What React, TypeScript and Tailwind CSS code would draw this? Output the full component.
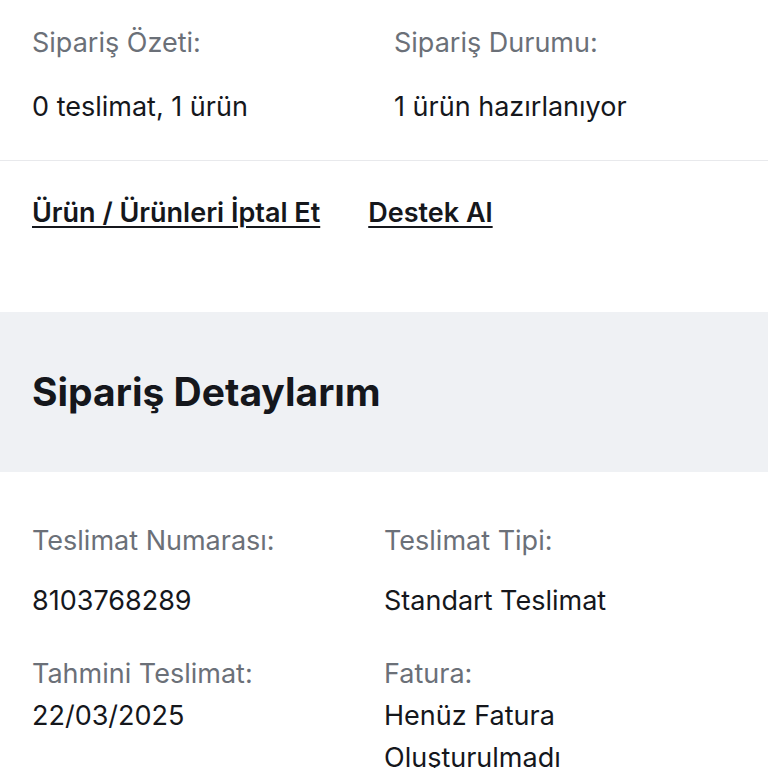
const labelCls = "text-[27px] leading-[42px] text-[#6b7078]";
const valueCls = "text-[27px] leading-[42px] text-[#15171c]";
const linkCls =
  "text-[27px] leading-[42px] font-semibold text-[#15171c] underline underline-offset-4 decoration-2";

export default function App() {
  return (
    <div className="w-[768px] h-[768px] overflow-hidden bg-white font-['Inter',sans-serif]">
      <div className="px-8 pt-[22px] pb-8 border-b border-[#e8e9ec]">
        <div className="grid grid-cols-[362px_1fr] gap-y-[22px]">
          <div className={labelCls}>Sipariş Özeti:</div>
          <div className={labelCls}>Sipariş Durumu:</div>
          <div className={valueCls}>0 teslimat, 1 ürün</div>
          <div className={valueCls}>1 ürün hazırlanıyor</div>
        </div>
      </div>

      <div className="flex gap-12 px-8 pt-[31px] pb-[78px]">
        <a href="#" className={linkCls}>
          Ürün / Ürünleri İptal Et
        </a>
        <a href="#" className={linkCls}>
          Destek Al
        </a>
      </div>

      <div className="bg-[#eff1f4] px-8 py-14">
        <h2 className="text-[39px] leading-[48px] font-bold text-[#15171c]">Sipariş Detaylarım</h2>
      </div>

      <div className="px-8 pt-12">
        <div className="grid grid-cols-[352px_1fr]">
          <div className={labelCls}>Teslimat Numarası:</div>
          <div className={labelCls}>Teslimat Tipi:</div>
          <div className={valueCls + " mt-[18px]"}>8103768289</div>
          <div className={valueCls + " mt-[18px]"}>Standart Teslimat</div>
          <div className={labelCls + " mt-[31px]"}>Tahmini Teslimat:</div>
          <div className={labelCls + " mt-[31px]"}>Fatura:</div>
          <div className={valueCls}>22/03/2025</div>
          <div className={valueCls}>
            Henüz Fatura
            <br />
            Oluşturulmadı
          </div>
        </div>
      </div>
    </div>
  );
}
